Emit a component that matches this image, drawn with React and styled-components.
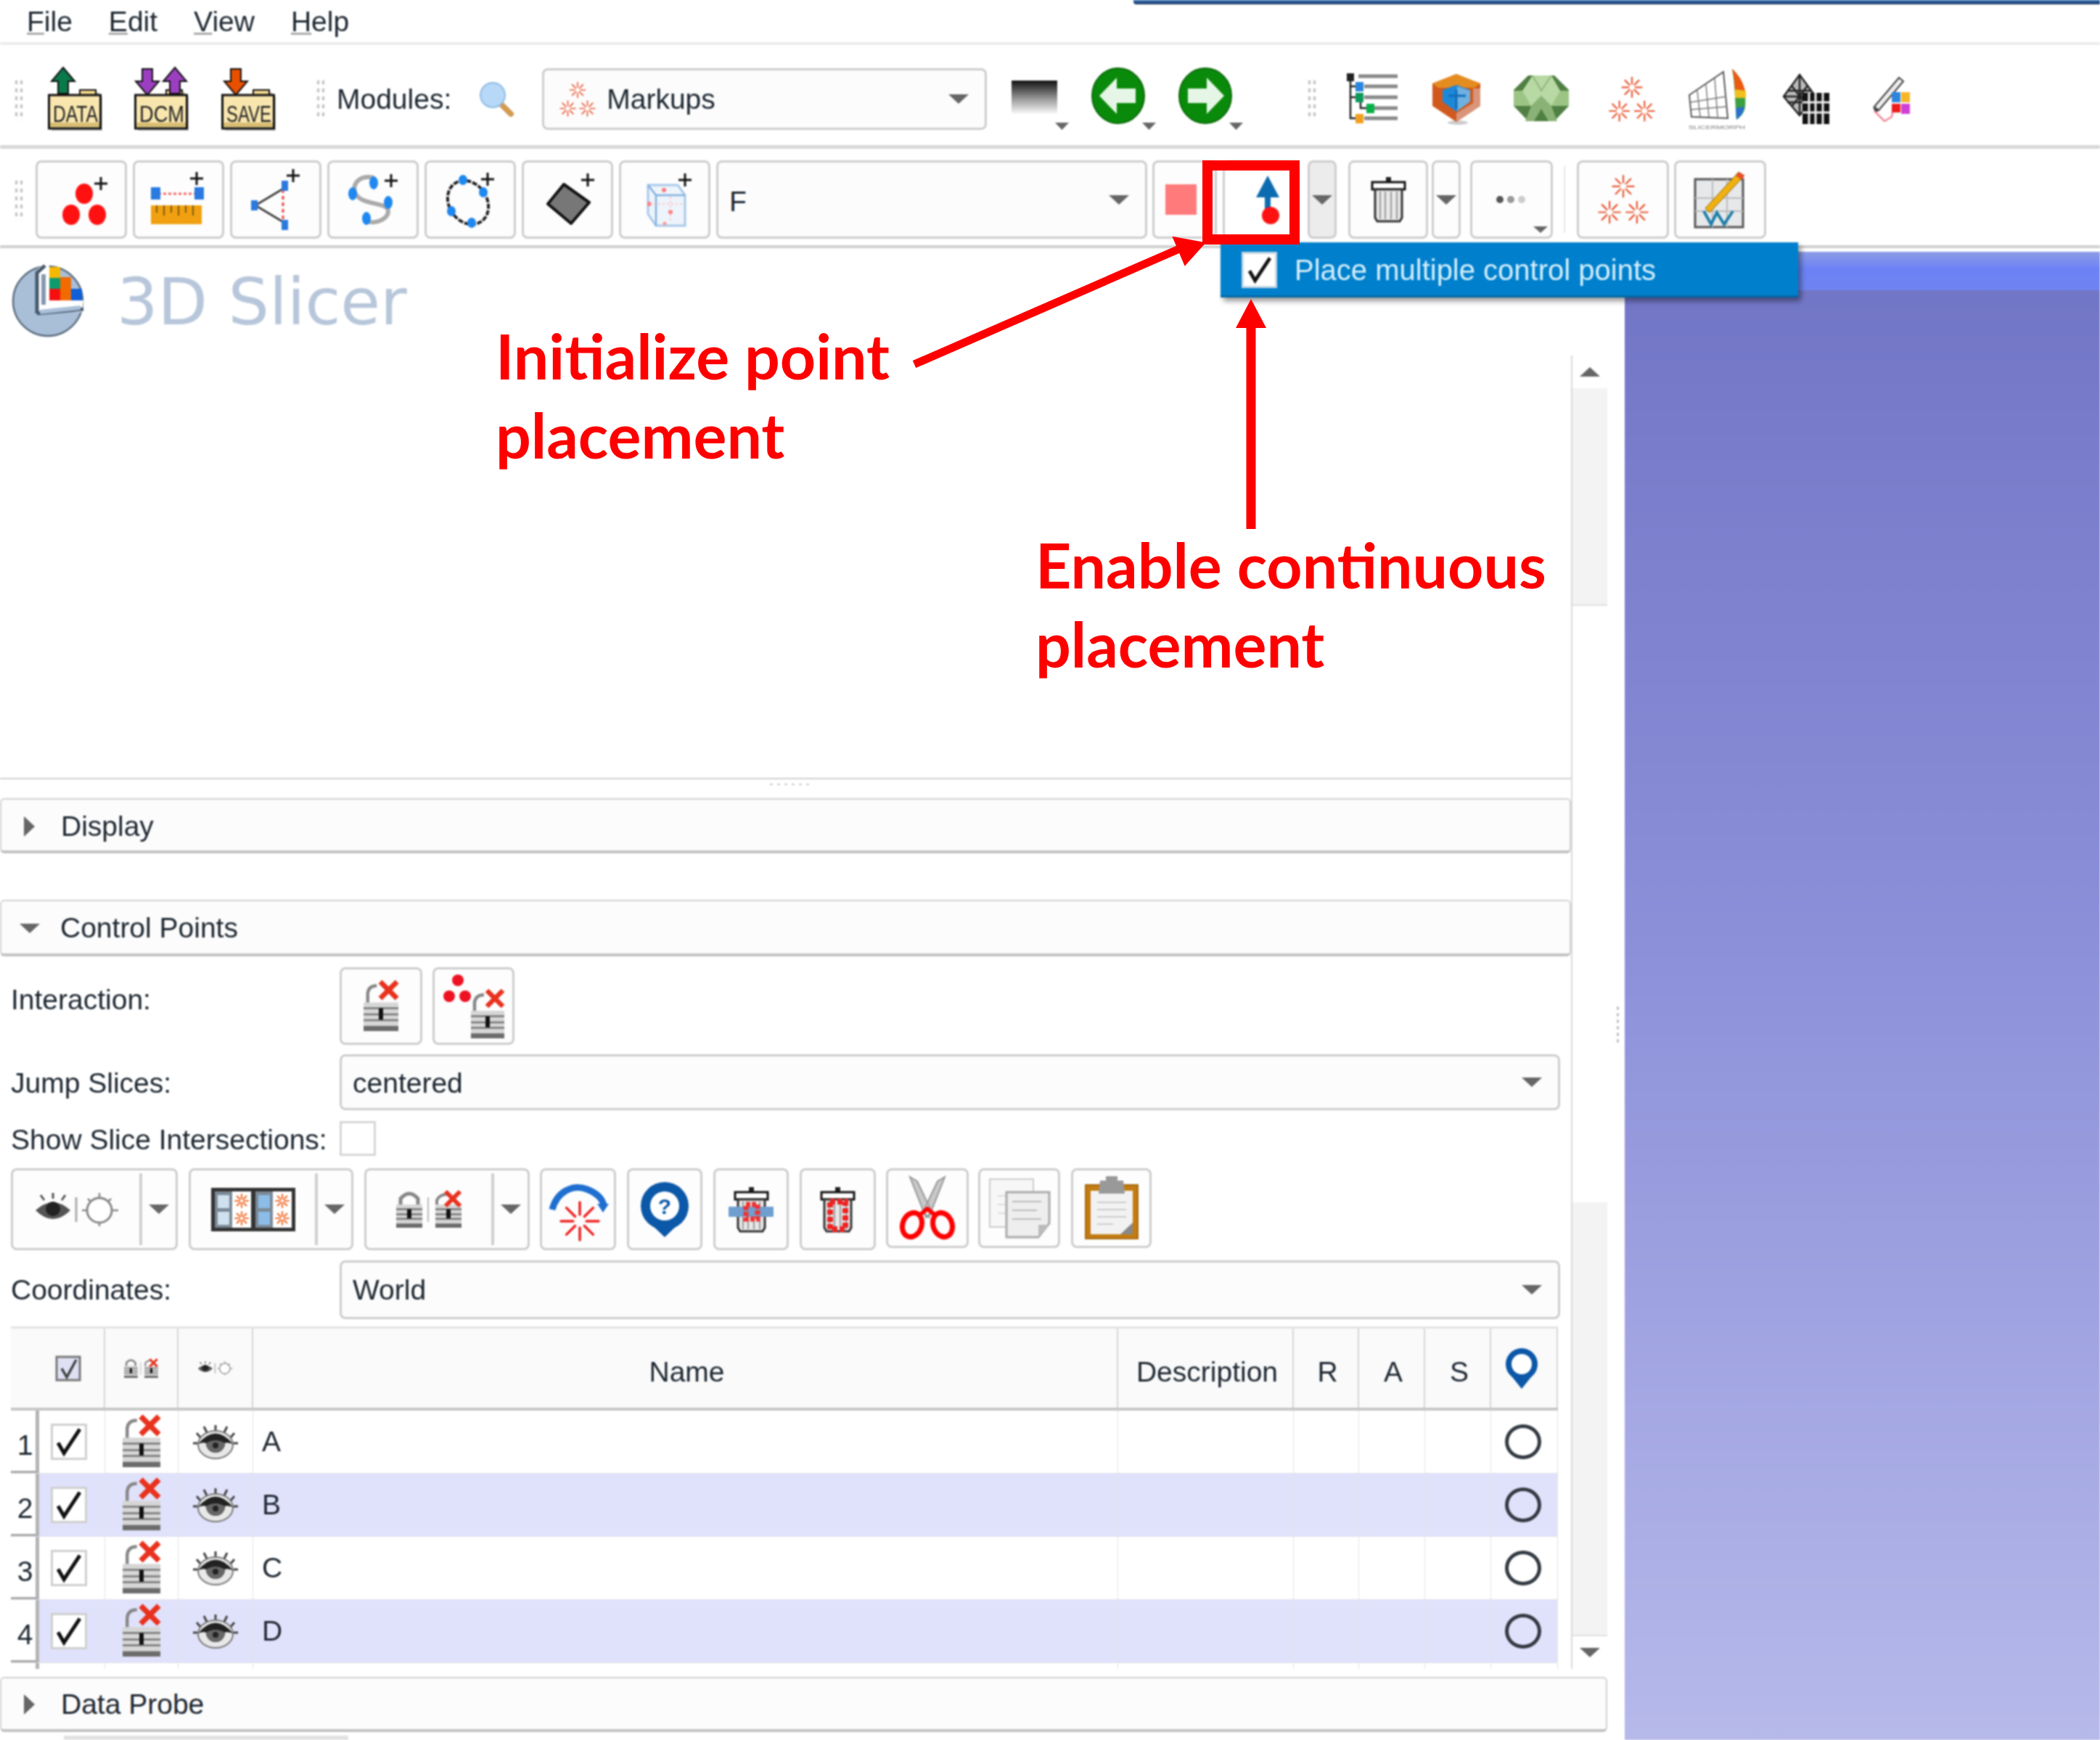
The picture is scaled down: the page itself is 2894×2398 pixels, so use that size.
import React from 'react';
import styled, { createGlobalStyle } from 'styled-components';

const GlobalStyle = createGlobalStyle`
  html, body { margin: 0; padding: 0; background: #fff; }
  * { box-sizing: border-box; }
`;

const Page = styled.div`
  position: relative;
  width: 2894px;
  height: 2398px;
  overflow: hidden;
  background: #fff;
  font-family: "Liberation Sans", Arial, sans-serif;
  font-size: 39px;
  color: #1c2630;
`;

const Shell = styled.div`
  position: relative;
  width: 100%;
  height: 100%;
  display: flex;
  flex-direction: column;
  filter: blur(0.8px);
`;

const TitleStrip = styled.div`
  position: absolute;
  left: 1562px;
  right: 0;
  top: 0;
  height: 6px;
  background: #2c5f9e;
  border-bottom: 2px solid #1d3a63;
  border-bottom-left-radius: 4px;
`;

const MenuBar = styled.div`
  height: 62px;
  flex: none;
  display: flex;
  gap: 50px;
  padding: 8px 0 0 37px;
  border-bottom: 4px solid #ececec;
`;

const MenuItem = styled.span`
  line-height: 44px;
  &::first-letter { text-decoration: underline; text-decoration-color: #aaa; }
`;

const MainToolbar = styled.div`
  height: 143px;
  flex: none;
  display: flex;
  align-items: center;
  padding: 11px 0 0 19px;
  border-bottom: 5px solid #d8d8d8;
`;

const MarkupsToolbar = styled.div`
  height: 137px;
  flex: none;
  display: flex;
  align-items: center;
  gap: 8px;
  padding: 7px 0 0 19px;
  border-bottom: 4px solid #cfcfcf;
`;

const Grip = styled.div`
  width: 13px;
  height: 58px;
  flex: none;
  margin-left: ${p => p.$ml || 0}px;
  background-image: radial-gradient(#c4c4c4 1.6px, transparent 2.2px);
  background-size: 7px 11px;
`;

const IconSvg = styled.svg`
  flex: none;
  display: block;
  overflow: visible;
  margin-left: ${p => p.$ml || 0}px;
`;

const ToolLabel = styled.span`
  margin-left: ${p => p.$ml || 0}px;
  flex: none;
`;

const ToolButton = styled.div`
  position: relative;
  width: ${p => p.$w}px;
  height: ${p => p.$h || 108}px;
  flex: none;
  margin-left: ${p => p.$ml || 0}px;
  display: flex;
  align-items: center;
  justify-content: center;
  border: 3px solid #cdcdcd;
  border-radius: 8px;
  background: ${p => p.$bg || '#fdfdfd'};
`;

const SplitPart = styled.div`
  flex: 1;
  height: 100%;
  display: flex;
  align-items: center;
  justify-content: center;
`;

const SplitArrow = styled.div`
  width: 50px;
  flex: none;
  height: 92%;
  display: flex;
  align-items: center;
  justify-content: center;
  border-left: 4px solid #cfcfcf;
`;

const Corner = styled.div`
  position: absolute;
  right: 4px;
  bottom: 5px;
`;

const Caret = styled.span`
  display: block;
  flex: none;
  width: 0;
  height: 0;
  margin-left: ${p => p.$ml || 0}px;
  border-left: ${p => p.$s || 14}px solid transparent;
  border-right: ${p => p.$s || 14}px solid transparent;
  border-top: ${p => (p.$s || 14) * 0.95}px solid #666;
`;

const ComboBox = styled.div`
  flex: none;
  width: ${p => p.$w ? `${p.$w}px` : '100%'};
  height: ${p => p.$h}px;
  margin-left: ${p => p.$ml || 0}px;
  display: flex;
  align-items: center;
  justify-content: space-between;
  padding: 0 22px 0 ${p => p.$pl || 15}px;
  border: 3px solid #cdcdcd;
  border-radius: 8px;
  background: #fcfcfc;
`;

const ComboText = styled.span`
  padding-top: ${p => p.$drop || 0}px;
`;

const ComboValue = styled.span`
  display: flex;
  align-items: center;
  gap: 15px;
`;

const VLine = styled.div`
  width: 2px;
  height: 92px;
  margin: 0 8px 0 7px;
  background: #e6e6e6;
  flex: none;
`;

const Body = styled.div`
  flex: 1;
  min-height: 0;
  display: grid;
  grid-template-columns: 2239px 1fr;
`;

const LeftPanel = styled.div`
  display: flex;
  flex-direction: column;
  min-height: 0;
`;

const LogoRow = styled.div`
  height: 148px;
  flex: none;
  display: flex;
  align-items: flex-start;
  padding: 22px 0 0 15px;
  gap: 41px;
`;

const LogoText = styled.div`
  font-family: "DejaVu Sans", sans-serif;
  font-size: 89px;
  line-height: 104px;
  color: #b7c6da;
`;

const ScrollRow = styled.div`
  height: 1810px;
  flex: none;
  width: 2215px;
  display: grid;
  grid-template-columns: 2165px 50px;
`;

const ModuleContent = styled.div`
  display: flex;
  flex-direction: column;
  min-height: 0;
  overflow: hidden;
`;

const BlankArea = styled.div`
  height: 584px;
  flex: none;
  border-bottom: 2px solid #cfcfcf;
`;

const SplitterDots = styled.div`
  height: 26px;
  flex: none;
  display: flex;
  justify-content: center;
  align-items: flex-start;
  padding: 4px 0 0 10px;
  &::after {
    content: "";
    width: 60px;
    height: 6px;
    background-image: radial-gradient(#c4c4c4 1.6px, transparent 2.2px);
    background-size: 10px 6px;
  }
`;

const CollapsibleBar = styled.div`
  flex: none;
  height: ${p => p.$h || 78}px;
  width: 100%;
  margin-top: ${p => p.$mt || 0}px;
  display: flex;
  align-items: center;
  gap: ${p => p.$gap || 28}px;
  padding: ${p => p.$drop || 0}px 0 0 28px;
  border: 2px solid #d2d2d2;
  border-bottom: 4px solid #c2c2c2;
  border-radius: 6px;
  background: #fcfcfc;
`;

const SideCaret = styled.span`
  width: 0;
  height: 0;
  flex: none;
  margin: 0 6px 0 3px;
  border-top: 14px solid transparent;
  border-bottom: 14px solid transparent;
  border-left: 15px solid #666;
`;

const FormRow = styled.div`
  flex: none;
  display: grid;
  grid-template-columns: 453px 1fr;
  align-items: center;
  padding: 0 15px;
  height: ${p => p.$h}px;
  margin-top: ${p => p.$mt || 0}px;
`;

const FormLabel = styled.span`
  margin-bottom: ${p => p.$lift || 0}px;
  padding-top: ${p => p.$drop || 0}px;
`;

const ButtonPair = styled.div`
  display: flex;
  gap: 14px;
`;

const PlainCheck = styled.div`
  width: 50px;
  height: 48px;
  border: 3px solid #d6d6d6;
  background: #fff;
`;

const ActionRow = styled.div`
  flex: none;
  display: flex;
  gap: 15px;
  padding-left: 15px;
  margin-top: 17px;
  height: 113px;
  align-items: flex-start;
`;

const COLUMNS = '39px 91px 101px 103px 1192px 242px 90px 91px 91px 92px';

const Table = styled.div`
  flex: 1;
  min-height: 0;
  margin: 10px 0 0 15px;
  width: 2132px;
  overflow: hidden;
  border-top: 3px solid #e4e4e4;
`;

const HeadRow = styled.div`
  display: grid;
  grid-template-columns: ${COLUMNS};
  height: 113px;
  background: #fafafa;
  border-bottom: 4px solid #c6c6c6;
`;

const HeadCell = styled.div`
  display: flex;
  align-items: center;
  justify-content: center;
  padding: ${p => p.$text ? '11px 0 0 5px' : 0};
  border-right: ${p => p.$bare ? 'none' : '2px solid #d6d6d6'};
`;

const DataRow = styled.div`
  display: grid;
  grid-template-columns: ${COLUMNS};
  height: 87px;
  background: ${p => p.$alt ? '#e0e2fb' : '#fff'};
  border-bottom: 1px solid #e2e2ea;
`;

const RowNumber = styled.div`
  background: #fff;
  display: flex;
  align-items: center;
  justify-content: center;
  padding: 12px 0 0 5px;
  border-right: 5px solid #b4b4b4;
  border-bottom: 3px solid #a8a8a8;
`;

const Cell = styled.div`
  display: flex;
  align-items: center;
  justify-content: ${p => p.$left ? 'flex-start' : 'center'};
  padding-left: ${p => p.$left ? 12 : 0}px;
  border-right: 1px solid #e2e2e6;
`;

const RowCheck = styled.div`
  width: 50px;
  height: 50px;
  margin-right: 8px;
  background: #fff;
  border: 3px solid #cfcfcf;
  display: flex;
  align-items: center;
  justify-content: center;
`;

const Ring = styled.div`
  width: 50px;
  height: 48px;
  margin-right: 4px;
  border-radius: 50%;
  border: 5px solid #333a42;
`;

const Scrollbar = styled.div`
  display: grid;
  grid-template-rows: 45px 300px 822px 1fr 45px;
  justify-items: center;
  border-left: 2px solid #d8d8d8;
`;

const ScrollStep = styled.div`
  display: flex;
  align-items: center;
  justify-content: center;
  width: 100%;
  ${p => p.$up && 'transform: rotate(180deg);'}
`;

const ScrollTrack = styled.div`
  width: 100%;
  background: ${p => p.$on ? '#f3f3f3' : '#fff'};
  border-bottom: ${p => p.$on ? '2px solid #e0e0e0' : 'none'};
`;

const DataProbeWrap = styled.div`
  width: 2215px;
  flex: none;
  margin-top: 11px;
`;

const HScroll = styled.div`
  width: 392px;
  height: 6px;
  margin: 5px 0 0 88px;
  background: #e2e2e2;
`;

const SideDots = styled.div`
  position: absolute;
  left: 2226px;
  top: 1385px;
  width: 7px;
  height: 55px;
  background-image: radial-gradient(#c4c4c4 1.6px, transparent 2.2px);
  background-size: 7px 9px;
`;

const View3D = styled.div`
  display: flex;
  flex-direction: column;
  border-top: 5px solid #fff;
`;

const ViewBand = styled.div`
  height: 53px;
  flex: none;
  background: linear-gradient(#8d9ce6, #6c82f5 45%, #6f84f0);
`;

const ViewFill = styled.div`
  flex: 1;
  background: linear-gradient(#7276c6, #8c90d9 45%, #b6b9ea);
`;

const PopupMenu = styled.div`
  position: absolute;
  left: 1682px;
  top: 334px;
  width: 796px;
  height: 76px;
  display: flex;
  align-items: center;
  gap: 24px;
  padding: 3px 0 0 29px;
  background: #0080cc;
  color: #d6effc;
  border-bottom: 3px solid #0068a6;
  box-shadow: 4px 5px 7px rgba(0, 0, 0, 0.4);
  font-size: 40px;
`;

const PopupCheck = styled.div`
  width: 49px;
  height: 50px;
  background: #fff;
  border: 3px solid #c8d8e4;
  display: flex;
  align-items: center;
  justify-content: center;
`;

const Highlight = styled.div`
  position: absolute;
  left: 1657px;
  top: 221px;
  width: 134px;
  height: 116px;
  border: 14px solid #f00;
`;

const ArrowLayer = styled.svg`
  position: absolute;
  left: 0;
  top: 0;
  pointer-events: none;
`;

const Callout = styled.div`
  position: absolute;
  left: ${p => p.$x}px;
  top: ${p => p.$y}px;
  font-family: Lato, "Open Sans", sans-serif;
  font-weight: 700;
  font-size: 86px;
  line-height: 109px;
  color: #f00;
  white-space: pre;
`;

const Svg = ({ w, h, ml, children }) => (
  <IconSvg $ml={ml} width={w} height={h} viewBox={`0 0 ${w} ${h}`}>
    {children}
  </IconSvg>
);

const Spark = ({ x, y, r, c = '#e8552f', sw = 2.2 }) => (
  <g stroke={c} strokeWidth={sw} strokeLinecap="round">
    {[0, 45, 90, 135, 180, 225, 270, 315].map(a => {
      const t = (a * Math.PI) / 180;
      return (
        <line
          key={a}
          x1={x + Math.cos(t) * r * 0.35}
          y1={y + Math.sin(t) * r * 0.35}
          x2={x + Math.cos(t) * r}
          y2={y + Math.sin(t) * r}
        />
      );
    })}
  </g>
);

const Sparks = ({ s = 64, ml, sw }) => (
  <Svg w={s} h={s} ml={ml}>
    <Spark x={s / 2} y={s * 0.24} r={s * 0.21} sw={sw} />
    <Spark x={s * 0.23} y={s * 0.75} r={s * 0.21} sw={sw} />
    <Spark x={s * 0.77} y={s * 0.75} r={s * 0.21} sw={sw} />
  </Svg>
);

const Plus = ({ x, y }) => (
  <path d={`M${x - 9} ${y}h18M${x} ${y - 9}v18`} stroke="#111" strokeWidth="3" />
);

const UP = 'M20 0 L36 19 H27 V36 H13 V19 H4 Z';
const DOWN = 'M13 0 H27 V17 H36 L20 36 L4 17 H13 Z';

const FolderIcon = ({ label, arrows, ml }) => (
  <Svg w={76} h={88} ml={ml}>
    <path d="M3 38H44V32H68V38H73V85H3Z" fill="#000" opacity=".25" transform="translate(2 2)" />
    <path d="M44 38V31H66V38" fill="#f4d98c" stroke="#111" strokeWidth="2" />
    <rect x="1.5" y="38" width="71" height="46" fill="#f8e6ae" stroke="#111" strokeWidth="3" />
    <rect x="3" y="76" width="68" height="6" fill="#d8bd72" />
    {arrows.map(a => (
      <path key={a.x} d={a.d} transform={`translate(${a.x} ${a.y})`} fill={a.c} stroke="#111" strokeWidth="2" />
    ))}
    <text x="38" y="75" textAnchor="middle" fontFamily="Liberation Sans" fontSize="31" textLength="62" lengthAdjust="spacingAndGlyphs" fill="#222">
      {label}
    </text>
  </Svg>
);

const Magnifier = ({ ml }) => (
  <Svg w={48} h={48} ml={ml}>
    <path d="M30 30L44 44" stroke="#d39a52" strokeWidth="8" strokeLinecap="round" />
    <circle cx="19" cy="18" r="17" fill="#b7d8f6" stroke="#8fbce6" strokeWidth="2" />
  </Svg>
);

const GradientIcon = ({ ml }) => (
  <Svg w={79} h={88} ml={ml}>
    <defs>
      <linearGradient id="wl" x1="0" y1="0" x2="0" y2="1">
        <stop offset="0" stopColor="#111" />
        <stop offset=".55" stopColor="#999" />
        <stop offset="1" stopColor="#fafafa" />
      </linearGradient>
    </defs>
    <rect x="0" y="18" width="63" height="46" fill="url(#wl)" />
    <path d="M60 76h19l-9.500 10z" fill="#666" />
  </Svg>
);

const NavIcon = ({ back, ml }) => (
  <Svg w={89} h={88} ml={ml}>
    <ellipse cx="36" cy="39" rx="36" ry="38" fill="#0a8a0a" stroke="#0b6a0b" strokeWidth="2" />
    <path
      d={back ? 'M10 39 L34 14 V29 H60 V49 H34 V64 Z' : 'M62 39 L38 14 V29 H12 V49 H38 V64 Z'}
      fill="#e6f6e6"
    />
    <path d="M69 76h19l-9.500 10z" fill="#666" />
  </Svg>
);

const TreeIcon = ({ ml }) => (
  <Svg w={70} h={72} ml={ml}>
    <path d="M5 6V62H14M5 18H14M5 33H14M19 33V48H28" stroke="#222" strokeWidth="2.500" fill="none" />
    <rect x="0" y="0" width="10" height="11" fill="#222" />
    <path d="M16 4H70M24 18H70M24 33H70M38 48H70M24 62H70" stroke="#888" strokeWidth="5" />
    <rect x="12" y="12" width="11" height="13" fill="#2a86e0" />
    <rect x="12" y="27" width="11" height="13" fill="#0a9a5a" />
    <rect x="27" y="42" width="11" height="13" fill="#0ab04a" />
    <rect x="12" y="56" width="11" height="13" fill="#f0a020" />
  </Svg>
);

const ShieldIcon = ({ ml }) => (
  <Svg w={70} h={70} ml={ml}>
    <ellipse cx="37" cy="67" rx="14" ry="3" fill="#000" opacity=".2" />
    <path d="M35 0L68 13V44L35 66 2 44V13Z" fill="#d0591e" />
    <path d="M35 0L68 13 60 19H10L2 13Z" fill="#e58c20" />
    <path d="M68 20V44L35 66V54L58 40V20Z" fill="#d8957a" />
    <path d="M35 15L54 22V38L35 52 16 38V22Z" fill="#1e88d8" />
    <path d="M36 17L54 23V38L36 51Z" fill="#6fb0e0" />
    <path d="M35 22V48M24 30H48" stroke="#0f6cb8" strokeWidth="3" />
  </Svg>
);

const GemIcon = ({ ml }) => (
  <Svg w={78} h={66} ml={ml}>
    <path d="M20 0H56L76 20V42L56 63H20L0 42V20Z" fill="#4f7f42" />
    <path d="M0 21H76V42H0Z" fill="#9cc484" />
    <path d="M26 0H52L64 21 52 42 38 28 24 42 12 21Z" fill="#b8d8a4" />
    <path d="M24 42L38 28 52 42 60 63H48L38 46 28 63H16Z" fill="#8ab276" />
    <path d="M26 0L38 21 52 0" stroke="#8fb87c" strokeWidth="2" fill="none" />
  </Svg>
);

const MorphIcon = ({ ml }) => (
  <Svg w={83} h={84} ml={ml}>
    <path d="M3 36L50 4 56 68 6 66Z" fill="#fff" stroke="#555" strokeWidth="2" />
    <path d="M14 30L18 66M26 22L30 66M38 13L42 66M4 46L54 38M5 56L55 52" stroke="#777" strokeWidth="1.500" />
    <path d="M62 0C76 12 82 34 80 52 79 60 74 66 68 70 66 48 66 20 62 0Z" fill="#3aa040" />
    <path d="M62 0C74 10 80 24 81 38L66 36C66 24 65 12 62 0Z" fill="#ea5a10" />
    <path d="M66 28L81 30V40L66 40Z" fill="#f0c020" />
    <path d="M67 54L79 52 76 62 68 70Z" fill="#2a70d0" />
    <text x="41" y="83" textAnchor="middle" fontFamily="Liberation Sans" fontSize="8" textLength="78" lengthAdjust="spacingAndGlyphs" fill="#777">SLICERMORPH</text>
  </Svg>
);

const GridIcon = ({ ml }) => (
  <Svg w={63} h={68} ml={ml}>
    <path d="M22 0L44 30 22 56 0 30Z" fill="#bbb" stroke="#222" strokeWidth="2.500" />
    <path d="M11 15L33 44M22 0L22 56M33 15L11 44M0 30H44M5 22L39 22M5 38H39" stroke="#222" strokeWidth="2.500" />
    <rect x="26" y="25" width="37" height="43" fill="#111" />
    <path d="M35 25V68M44 25V68M54 25V68M26 38H63M26 52H63" stroke="#eee" strokeWidth="3" />
  </Svg>
);

const PaintIcon = ({ ml }) => (
  <Svg w={54} h={64} ml={ml}>
    <path d="M4 42L38 2 44 7 10 47Z" fill="#eee" stroke="#444" strokeWidth="2" />
    <path d="M2 42L10 48 5 50Z" fill="#333" />
    <path d="M4 48L18 62 28 56 30 44" stroke="#f28a9a" strokeWidth="2.500" fill="none" />
    <rect x="28" y="22" width="12" height="14" fill="#2a86e0" />
    <rect x="41" y="22" width="12" height="14" fill="#f7b52a" />
    <rect x="28" y="38" width="12" height="12" fill="#ee1c1c" />
    <rect x="41" y="38" width="12" height="14" fill="#d040d8" />
  </Svg>
);

const PointsAdd = () => (
  <Svg w={62} h={69} ml={10}>
    <Plus x={53} y={12} />
    <ellipse cx="30" cy="26" rx="12" ry="14" fill="#f11" />
    <ellipse cx="12" cy="55" rx="12" ry="14" fill="#f11" />
    <ellipse cx="48" cy="55" rx="12" ry="14" fill="#f11" />
  </Svg>
);

const RulerAdd = () => (
  <Svg w={76} h={78}>
    <Plus x={63} y={10} />
    <path d="M10 31H64" stroke="#e66" strokeWidth="3" strokeDasharray="4 3" />
    <rect x="0" y="22" width="13" height="17" fill="#2a7ae0" />
    <rect x="60" y="22" width="13" height="17" fill="#2a7ae0" />
    <rect x="0" y="47" width="70" height="26" fill="#f0a010" />
    <path d="M8 47v10M18 47v14M28 47v10M38 47v14M48 47v10M58 47v14" stroke="#7a5a10" strokeWidth="2" />
  </Svg>
);

const AngleAdd = () => (
  <Svg w={68} h={84}>
    <Plus x={58} y={9} />
    <path d="M6 50L46 26" stroke="#444" strokeWidth="3" />
    <path d="M6 50L46 74" stroke="#444" strokeWidth="3" />
    <path d="M44 28V72" stroke="#e44" strokeWidth="3" strokeDasharray="5 4" />
    <rect x="0" y="43" width="9" height="14" fill="#2a7ae0" />
    <rect x="42" y="16" width="9" height="14" fill="#2a7ae0" />
    <rect x="42" y="70" width="9" height="14" fill="#2a7ae0" />
  </Svg>
);

const CurveAdd = () => (
  <Svg w={70} h={72}>
    <Plus x={60} y={10} />
    <path d="M36 6C14 0 2 20 14 32S56 40 56 52 34 72 24 64" stroke="#aaa" strokeWidth="6" fill="none" />
    <ellipse cx="36" cy="13" rx="6" ry="9" fill="#1e88f0" />
    <ellipse cx="7" cy="28" rx="6" ry="9" fill="#1e88f0" />
    <ellipse cx="56" cy="40" rx="6" ry="9" fill="#1e88f0" />
    <ellipse cx="26" cy="62" rx="6" ry="9" fill="#1e88f0" />
  </Svg>
);

const ClosedCurveAdd = () => (
  <Svg w={72} h={76}>
    <Plus x={60} y={10} />
    <ellipse cx="33" cy="42" rx="26" ry="32" transform="rotate(-35 33 42)" stroke="#222" strokeWidth="4" strokeDasharray="7 2" fill="none" />
    <ellipse cx="26" cy="11" rx="6" ry="7" fill="#1e88f0" />
    <ellipse cx="54" cy="28" rx="6" ry="7" fill="#1e88f0" />
    <ellipse cx="10" cy="54" rx="6" ry="7" fill="#1e88f0" />
    <ellipse cx="38" cy="70" rx="6" ry="7" fill="#1e88f0" />
  </Svg>
);

const PlaneAdd = () => (
  <Svg w={72} h={72} ml={14}>
    <Plus x={57} y={9} />
    <path d="M24 15L59 40 34 69 2 42Z" fill="#777" stroke="#111" strokeWidth="4" strokeLinejoin="round" />
  </Svg>
);

const RoiAdd = () => (
  <Svg w={62} h={72} ml={14}>
    <Plus x={52} y={9} />
    <path d="M1 16H42L52 30V72H12L1 56Z" fill="#eef4fb" stroke="#a8c8ea" strokeWidth="3" />
    <path d="M1 16L12 30H52M12 30V72" fill="none" stroke="#7fb0e0" strokeWidth="2.500" />
    <circle cx="23" cy="23" r="3" fill="#f77" />
    <circle cx="3" cy="42" r="3" fill="#f77" />
    <circle cx="32" cy="53" r="3" fill="#f77" />
    <circle cx="24" cy="69" r="2.500" fill="#f99" />
    <path d="M3 42H50M32 32V68" stroke="#fbb" strokeWidth="1.500" strokeDasharray="3 3" />
  </Svg>
);

const PlaceIcon = () => (
  <Svg w={32} h={67}>
    <path d="M16 0L32 30H20V46H12V30H0Z" fill="#0d6cb0" />
    <ellipse cx="20" cy="55" rx="12" ry="12" fill="#f11" />
  </Svg>
);

const TrashIcon = ({ w = 47, h = 62, body = 'plain', band }) => (
  <Svg w={band ? 62 : w} h={h}>
    <g transform={band ? 'translate(8 0)' : undefined}>
      <rect x="20" y="0" width="7" height="7" fill="#222" />
      <rect x="1" y="7" width="45" height="10" fill="#fff" stroke="#111" strokeWidth="3" />
      <path d="M5 17V56L8 61H39L42 56V17Z" fill="#e8e8e8" stroke="#333" strokeWidth="3" />
      <path d="M12 20V58M19 20V58M27 20V58M35 20V58" stroke="#999" strokeWidth="2" />
    </g>
    {band && <rect x="0" y="27" width="62" height="14" fill="#6f9fd0" />}
    {band && (
      <path d="M24 24H40V44H24Z" fill="none" stroke="#e33" strokeWidth="7" strokeDasharray="6 2" />
    )}
    {body === 'red' && (
      <path d="M13 20H34V58H13Z" fill="none" stroke="#e22" strokeWidth="8" strokeDasharray="7 3" />
    )}
  </Svg>
);

const DotsIcon = () => (
  <Svg w={44} h={14}>
    <circle cx="6" cy="7" r="5" fill="#555" />
    <circle cx="21" cy="7" r="5" fill="#999" />
    <circle cx="36" cy="7" r="5" fill="#ccc" />
  </Svg>
);

const ChartIcon = () => (
  <Svg w={70} h={76}>
    <rect x="0" y="10" width="66" height="66" fill="#e6e8ea" stroke="#555" strokeWidth="3" />
    <path d="M24 10V76M44 10V76M0 36H66M0 54H66" stroke="#bbb" strokeWidth="2" />
    <path d="M14 50L60 0 68 5 20 56Z" fill="#f0b010" stroke="#8a6a10" strokeWidth="1" />
    <path d="M60 0L68 5 64 11 56 5Z" fill="#e8502a" />
    <path d="M12 54L22 72 30 56 40 72 52 54" stroke="#1e7ea8" strokeWidth="4" fill="none" />
  </Svg>
);

const LockBody = ({ x, y, w, h }) => (
  <g transform={`translate(${x} ${y})`}>
    <rect width={w} height={h} fill="#d6d6d6" />
    <path d={`M0 ${h * 0.2}H${w}M0 ${h * 0.42}H${w}M0 ${h * 0.62}H${w}`} stroke="#777" strokeWidth="2.500" />
    <rect y={h * 0.82} width={w} height={h * 0.18} fill="#6c6c6c" />
    <rect x={w / 2 - 3} y={h * 0.2} width="6" height={h * 0.4} fill="#111" />
  </g>
);

const XMark = ({ x, y, s }) => (
  <path d={`M${x} ${y}L${x + s} ${y + s}M${x + s} ${y}L${x} ${y + s}`} stroke="#e8321e" strokeWidth={s * 0.3} />
);

const LockX = ({ w = 48, h = 68 }) => (
  <Svg w={w} h={h}>
    <path d={`M${w * 0.12} ${h * 0.45}V${h * 0.24}Q${w * 0.14} ${h * 0.08} ${w * 0.38} ${h * 0.08}`} stroke="#888" strokeWidth="4.500" fill="none" />
    <LockBody x={0} y={h * 0.42} w={w} h={h * 0.58} />
    <XMark x={w * 0.48} y={0} s={w * 0.48} />
  </Svg>
);

const PointsLock = () => (
  <Svg w={84} h={88}>
    <circle cx="20" cy="8" r="8" fill="#ee1122" />
    <circle cx="8" cy="30" r="8" fill="#ee1122" />
    <circle cx="30" cy="30" r="8" fill="#ee1122" />
    <g transform="translate(38 22)">
      <path d="M5 30V16Q7 6 18 6" stroke="#888" strokeWidth="4.500" fill="none" />
      <LockBody x={0} y={28} w={46} h={38} />
      <XMark x={22} y={0} s={22} />
    </g>
  </Svg>
);

const Eye = () => (
  <Svg w={62} h={48}>
    <path d="M31 12V1M20 13L15 3M42 13L47 3M11 19L5 12M51 19L57 12M6 26H0M56 26H62" stroke="#444" strokeWidth="3" />
    <ellipse cx="31" cy="28" rx="24" ry="19" fill="#e8e8e8" stroke="#777" strokeWidth="2" />
    <path d="M7 27Q31 -2 55 27Q46 24 44 26A13 13 0 0 1 18 26Q14 24 7 27Z" fill="#222" />
    <path d="M18 26A13 13 0 0 0 44 26Q31 18 18 26Z" fill="#666" />
    <circle cx="31" cy="29" r="4" fill="#222" />
  </Svg>
);

const EyeSun = ({ s = 1 }) => (
  <Svg w={116 * s} h={46 * s}>
    <g transform={`scale(${s})`}>
      <path d="M26 8V0M14 10L9 3M38 10L43 3" stroke="#555" strokeWidth="3" />
      <path d="M2 24Q26 2 50 24Q26 48 2 24Z" fill="#555" />
      <circle cx="26" cy="22" r="10" fill="#222" />
      <path d="M58 6V40" stroke="#aaa" strokeWidth="3" />
      <circle cx="90" cy="24" r="17" fill="#fff" stroke="#888" strokeWidth="3" />
      <path d="M90 0V6M66 24H72M108 24H116M74 8L78 12M106 8L102 12M90 42V46" stroke="#888" strokeWidth="2.500" />
    </g>
  </Svg>
);

const VisibilityGrid = () => (
  <Svg w={116} h={60}>
    <rect width="116" height="60" fill="#333" />
    <rect x="5" y="5" width="50" height="50" fill="#fff" />
    <rect x="61" y="5" width="50" height="50" fill="#fff" />
    <rect x="5" y="5" width="24" height="50" fill="#7c8a96" />
    <rect x="61" y="5" width="24" height="50" fill="#7c8a96" />
    <rect x="9" y="10" width="16" height="18" fill="#cfe0ee" />
    <rect x="9" y="33" width="16" height="18" fill="#cfe0ee" />
    <rect x="65" y="10" width="16" height="18" fill="#8cbce8" />
    <rect x="65" y="33" width="16" height="18" fill="#8cbce8" />
    <Spark x={42} y={18} r={9} c="#f07030" />
    <Spark x={42} y={42} r={9} c="#f07030" />
    <Spark x={98} y={18} r={9} c="#f07030" />
    <Spark x={98} y={42} r={9} c="#f07030" />
  </Svg>
);

const LockPair = ({ s = 1 }) => (
  <Svg w={90 * s} h={50 * s}>
    <g transform={`scale(${s})`}>
      <path d="M6 20V10Q18 -4 30 10V20" stroke="#888" strokeWidth="5" fill="none" />
      <LockBody x={0} y={18} w={36} h={32} />
      <path d="M44 8V42" stroke="#bbb" strokeWidth="2" />
      <path d="M56 20V12Q60 4 70 4" stroke="#888" strokeWidth="4" fill="none" />
      <LockBody x={54} y={18} w={36} h={32} />
      <XMark x={68} y={0} s={20} />
    </g>
  </Svg>
);

const JumpIcon = () => (
  <Svg w={84} h={84}>
    <path d="M6 42C12 18 34 6 54 14S76 32 78 38" stroke="#1e6fd0" strokeWidth="9" fill="none" />
    <path d="M68 34H84L76 46Z" fill="#1e6fd0" />
    <Spark x={44} y={58} r={26} c="#f02020" sw={3.500} />
  </Svg>
);

const PinIcon = ({ w = 66, h = 76, ring = 13, help }) => {
  const r = w / 2;
  return (
    <Svg w={w} h={h}>
      <path d={`M${r} ${h}L${w * 0.08} ${r * 1.5}H${w * 0.92}Z`} fill="#0b57a8" />
      <circle cx={r} cy={r} r={r} fill="#0b57a8" />
      <circle cx={r} cy={r} r={r - ring} fill="#fff" />
      {help && (
        <text x={r} y={r + 11} textAnchor="middle" fontFamily="Liberation Sans" fontWeight="700" fontSize="30" fill="#0b57a8">?</text>
      )}
    </Svg>
  );
};

const ScissorsIcon = () => (
  <Svg w={76} h={86}>
    <path d="M14 0L24 6 44 48 36 56ZM62 0L52 6 32 48 40 56Z" fill="#c8c8c8" stroke="#999" strokeWidth="2" />
    <ellipse cx="17" cy="66" rx="13" ry="17" transform="rotate(20 17 66)" fill="none" stroke="#f00" strokeWidth="7" />
    <ellipse cx="59" cy="66" rx="13" ry="17" transform="rotate(-20 59 66)" fill="none" stroke="#f00" strokeWidth="7" />
    <path d="M28 52L38 44 48 52" stroke="#f00" strokeWidth="6" fill="none" />
  </Svg>
);

const CopyIcon = () => (
  <Svg w={84} h={82}>
    <rect x="1" y="1" width="60" height="66" fill="#f7f7f7" stroke="#ccc" strokeWidth="2" />
    <path d="M12 24H34M12 36H34M12 48H34" stroke="#ddd" strokeWidth="2" />
    <path d="M24 19H83V62L68 81H24Z" fill="#eee" stroke="#aaa" strokeWidth="3" />
    <path d="M32 32H72M32 44H66M32 56H72" stroke="#bbb" strokeWidth="2" />
    <path d="M68 81V64H83Z" fill="#bbb" />
  </Svg>
);

const ClipboardIcon = () => (
  <Svg w={76} h={88}>
    <rect x="2" y="12" width="72" height="74" fill="#c27c12" stroke="#a86a10" strokeWidth="2" />
    <rect x="9" y="20" width="58" height="60" fill="#f2f2f2" />
    <path d="M18 36H58M18 46H58M18 56H58M18 66H40" stroke="#ccc" strokeWidth="2" />
    <path d="M22 6H30V0H46V6H54L56 24H20Z" fill="#999" />
    <path d="M50 80L67 80V64Z" fill="#888" />
  </Svg>
);

const CheckMark = ({ s = 34, c = '#111' }) => (
  <Svg w={s} h={s * 1.1}>
    <path
      d={`M${s * 0.06} ${s * 0.6}L${s * 0.3} ${s * 1.02}L${s * 0.94} ${s * 0.05}`}
      stroke={c}
      strokeWidth={s * 0.15}
      fill="none"
    />
  </Svg>
);

const HeadCheck = () => (
  <Svg w={36} h={36} ml={-10}>
    <rect x="2" y="2" width="32" height="32" fill="#dfe0f4" stroke="#777" strokeWidth="3" />
    <path d="M9 18L16 30 29 6" stroke="#444" strokeWidth="3.500" fill="none" />
  </Svg>
);

const SlicerLogo = () => (
  <Svg w={105} h={102}>
    <circle cx="51" cy="51" r="48" fill="#a9bfd8" stroke="#5c6e80" strokeWidth="2.500" />
    <path d="M47 0L37 6V66H98L100 50 53 50 53 2Z" fill="#fff" />
    <path d="M36 68V12L47 2M36 68L100 62" stroke="#46586c" strokeWidth="5" fill="none" />
    <path d="M45 14V56" stroke="#8498ae" strokeWidth="6" />
    <path d="M40 66L96 60" stroke="#a9bfd8" strokeWidth="6" />
    <rect x="53" y="4" width="15" height="15" fill="#f5b800" />
    <rect x="53" y="19" width="15" height="15" fill="#0f9a6e" />
    <rect x="68" y="18" width="15" height="16" fill="#f26a00" />
    <rect x="53" y="34" width="15" height="16" fill="#f50f0f" />
    <rect x="68" y="34" width="15" height="16" fill="#f26a00" />
    <rect x="83" y="34" width="15" height="16" fill="#0f5fd8" />
  </Svg>
);

const ROWS = ['A', 'B', 'C', 'D'];

export default function App() {
  return (
    <Page>
      <GlobalStyle />
      <Shell>
        <TitleStrip />
        <MenuBar>
          <MenuItem>File</MenuItem>
          <MenuItem>Edit</MenuItem>
          <MenuItem>View</MenuItem>
          <MenuItem>Help</MenuItem>
        </MenuBar>

        <MainToolbar>
          <Grip />
          <FolderIcon ml={34} label="DATA" arrows={[{ x: 1, y: 0, d: UP, c: '#0a7a4a' }]} />
          <FolderIcon ml={43} label="DCM" arrows={[{ x: -2, y: 2, d: DOWN, c: '#9b3fc0' }, { x: 36, y: 0, d: UP, c: '#9b3fc0' }]} />
          <FolderIcon ml={44} label="SAVE" arrows={[{ x: 0, y: 2, d: DOWN, c: '#e85000' }]} />
          <Grip $ml={54} />
          <ToolLabel $ml={16}>Modules:</ToolLabel>
          <Magnifier ml={38} />
          <ComboBox $w={613} $h={85} $ml={39} $pl={21}>
            <ComboValue>
              <Sparks s={50} sw={1.600} />
              Markups
            </ComboValue>
            <Caret />
          </ComboBox>
          <GradientIcon ml={34} />
          <NavIcon back ml={32} />
          <NavIcon ml={31} />
          <Grip $ml={87} />
          <TreeIcon ml={42} />
          <ShieldIcon ml={46} />
          <GemIcon ml={44} />
          <Sparks s={64} ml={53} />
          <MorphIcon ml={44} />
          <GridIcon ml={50} />
          <PaintIcon ml={58} />
        </MainToolbar>

        <MarkupsToolbar>
          <Grip />
          <ToolButton $w={126} $ml={9}><PointsAdd /></ToolButton>
          <ToolButton $w={126}><RulerAdd /></ToolButton>
          <ToolButton $w={126}><AngleAdd /></ToolButton>
          <ToolButton $w={126}><CurveAdd /></ToolButton>
          <ToolButton $w={126}><ClosedCurveAdd /></ToolButton>
          <ToolButton $w={126}><PlaneAdd /></ToolButton>
          <ToolButton $w={126}><RoiAdd /></ToolButton>
          <ComboBox $w={594} $h={108}>
            <ComboText $drop={5}>F</ComboText>
            <Caret />
          </ComboBox>
          <ToolButton $w={89} $ml={-1}>
            <Svg w={43} h={42} ml={-10}><rect width="43" height="42" fill="#ff7b7b" /></Svg>
          </ToolButton>
          <ToolButton $w={105} $bg="#fff"><Svg w={18} h={1} /><PlaceIcon /></ToolButton>
          <ToolButton $w={40} $ml={4} $bg="#ececec"><Caret /></ToolButton>
          <ToolButton $w={110} $ml={8}><TrashIcon /></ToolButton>
          <ToolButton $w={40} $ml={-3}><Caret /></ToolButton>
          <ToolButton $w={114} $ml={5}>
            <DotsIcon />
            <Corner><Caret $s={10} /></Corner>
          </ToolButton>
          <VLine />
          <ToolButton $w={127}><Sparks s={70} /></ToolButton>
          <ToolButton $w={127} $ml={-1}><ChartIcon /></ToolButton>
        </MarkupsToolbar>

        <Body>
          <LeftPanel>
            <LogoRow>
              <SlicerLogo />
              <LogoText>3D Slicer</LogoText>
            </LogoRow>

            <ScrollRow>
              <ModuleContent>
                <BlankArea />
                <SplitterDots />
                <CollapsibleBar $h={76} $gap={30} $drop={3}>
                  <SideCaret />
                  Display
                </CollapsibleBar>
                <CollapsibleBar $mt={64} $gap={28} $drop={2}>
                  <Caret $ml={-3} />
                  Control Points
                </CollapsibleBar>

                <FormRow $h={107} $mt={15}>
                  <FormLabel $lift={17}>Interaction:</FormLabel>
                  <ButtonPair>
                    <ToolButton $w={114} $h={107}><LockX /></ToolButton>
                    <ToolButton $w={113} $h={107}><PointsLock /></ToolButton>
                  </ButtonPair>
                </FormRow>
                <FormRow $h={77} $mt={13}>
                  <FormLabel $drop={3}>Jump Slices:</FormLabel>
                  <ComboBox $h={77}>
                    <ComboText $drop={3}>centered</ComboText>
                    <Caret />
                  </ComboBox>
                </FormRow>
                <FormRow $h={48} $mt={15}>
                  <FormLabel $drop={3}>Show Slice Intersections:</FormLabel>
                  <PlainCheck />
                </FormRow>

                <ActionRow>
                  <ToolButton $w={230} $h={113}>
                    <SplitPart><EyeSun /></SplitPart>
                    <SplitArrow><Caret /></SplitArrow>
                  </ToolButton>
                  <ToolButton $w={227} $h={113}>
                    <SplitPart><VisibilityGrid /></SplitPart>
                    <SplitArrow><Caret /></SplitArrow>
                  </ToolButton>
                  <ToolButton $w={228} $h={113}>
                    <SplitPart><LockPair /></SplitPart>
                    <SplitArrow><Caret /></SplitArrow>
                  </ToolButton>
                  <ToolButton $w={105} $h={113} $ml={-1}><JumpIcon /></ToolButton>
                  <ToolButton $w={104} $h={113}><PinIcon help /></ToolButton>
                  <ToolButton $w={104} $h={113}><TrashIcon band /></ToolButton>
                  <ToolButton $w={105} $h={113}><TrashIcon body="red" /></ToolButton>
                  <ToolButton $w={114} $h={110} $ml={-1}><ScissorsIcon /></ToolButton>
                  <ToolButton $w={113} $h={110} $ml={-2}><CopyIcon /></ToolButton>
                  <ToolButton $w={111} $h={110}><ClipboardIcon /></ToolButton>
                </ActionRow>

                <FormRow $h={81} $mt={14}>
                  <FormLabel>Coordinates:</FormLabel>
                  <ComboBox $h={81}>
                    <ComboText>World</ComboText>
                    <Caret />
                  </ComboBox>
                </FormRow>

                <Table>
                  <HeadRow>
                    <HeadCell $bare />
                    <HeadCell><HeadCheck /></HeadCell>
                    <HeadCell><LockPair s={0.52} /></HeadCell>
                    <HeadCell><EyeSun s={0.42} /></HeadCell>
                    <HeadCell $text>Name</HeadCell>
                    <HeadCell $text>Description</HeadCell>
                    <HeadCell $text>R</HeadCell>
                    <HeadCell $text>A</HeadCell>
                    <HeadCell $text>S</HeadCell>
                    <HeadCell><Svg w={1} h={1} ml={-7} /><PinIcon w={44} h={56} ring={8} /></HeadCell>
                  </HeadRow>
                  {ROWS.map((name, i) => (
                    <DataRow key={name} $alt={i % 2 === 1}>
                      <RowNumber>{i + 1}</RowNumber>
                      <Cell><RowCheck><CheckMark /></RowCheck></Cell>
                      <Cell><LockX w={52} h={70} /></Cell>
                      <Cell><Eye /></Cell>
                      <Cell $left>{name}</Cell>
                      <Cell />
                      <Cell />
                      <Cell />
                      <Cell />
                      <Cell><Ring /></Cell>
                    </DataRow>
                  ))}
                  <DataRow>
                    <RowNumber />
                    <Cell />
                    <Cell />
                    <Cell />
                    <Cell $left />
                    <Cell />
                    <Cell />
                    <Cell />
                    <Cell />
                    <Cell />
                  </DataRow>
                </Table>
              </ModuleContent>

              <Scrollbar>
                <ScrollStep $up><Caret $s={14} /></ScrollStep>
                <ScrollTrack $on />
                <ScrollTrack />
                <ScrollTrack $on />
                <ScrollStep><Caret $s={14} /></ScrollStep>
              </Scrollbar>
            </ScrollRow>

            <DataProbeWrap>
              <CollapsibleBar $h={76} $gap={30} $drop={2}>
                <SideCaret />
                Data Probe
              </CollapsibleBar>
              <HScroll />
            </DataProbeWrap>
          </LeftPanel>

          <View3D>
            <ViewBand />
            <ViewFill />
          </View3D>
        </Body>

        <SideDots />

        <PopupMenu>
          <PopupCheck><CheckMark s={32} /></PopupCheck>
          Place multiple control points
        </PopupMenu>
      </Shell>

      <Highlight />
      <ArrowLayer width="2894" height="2398" viewBox="0 0 2894 2398">
        <path d="M1260 502L1632 340" stroke="#f00" strokeWidth="11" fill="none" />
        <path d="M1660 335L1617 327 1633 365Z" fill="#f00" stroke="#f00" strokeWidth="2" />
        <path d="M1724 729V445" stroke="#f00" strokeWidth="13" fill="none" />
        <path d="M1724 412L1745 452H1703Z" fill="#f00" />
      </ArrowLayer>
      <Callout $x={683} $y={435}>{'Initialize point\nplacement'}</Callout>
      <Callout $x={1427} $y={723}>{'Enable continuous\nplacement'}</Callout>
    </Page>
  );
}
